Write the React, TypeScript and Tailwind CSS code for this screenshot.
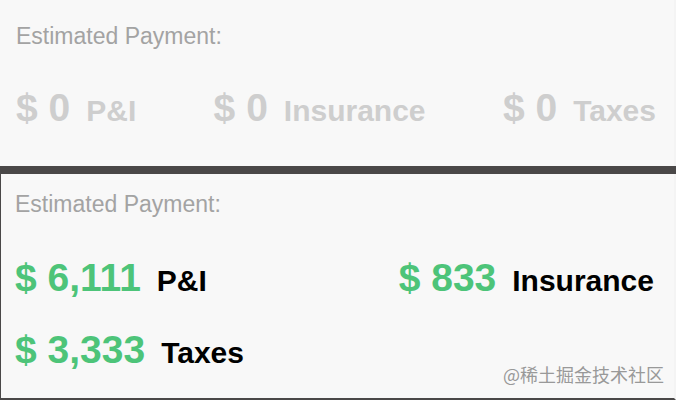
type Item = { amount: string; label: string };

const estimates: Item[] = [
  { amount: '0', label: 'P&I' },
  { amount: '0', label: 'Insurance' },
  { amount: '0', label: 'Taxes' },
];

const results: Item[] = [
  { amount: '6,111', label: 'P&I' },
  { amount: '833', label: 'Insurance' },
  { amount: '3,333', label: 'Taxes' },
];

function Payments({ items, active }: { items: Item[]; active: boolean }) {
  return (
    <dl className={`flex flex-wrap justify-between gap-x-16 gap-y-7 font-bold ${active ? 'text-black' : 'text-[#cecece]'}`}>
      {items.map((item) => (
        <div key={item.label} className="flex flex-row-reverse items-baseline gap-4">
          <dt className="text-[30px] leading-9">{item.label}</dt>
          <dd className={`text-[39px] leading-11 ${active ? 'text-[#4dc479]' : ''}`}>$ {item.amount}</dd>
        </div>
      ))}
    </dl>
  );
}

export default function App() {
  return (
    <main className="relative bg-[#4a4848] font-['Liberation_Sans',Arial,sans-serif]">
      <section className="border-r-2 border-r-[#f4f4f4] bg-[#f8f8f8] pt-5 pr-[18px] pb-9 pl-4">
        <h2 className="mb-[34px] text-[23px] leading-8 text-[#a3a3a3]">Estimated Payment:</h2>
        <Payments items={estimates} active={false} />
      </section>
      <section className="mt-2 border-r-2 border-b-2 border-l border-[#4a4848] border-r-[#f4f4f4] bg-[#f8f8f8] pt-3.5 pr-5 pb-[26px] pl-3.5">
        <h2 className="mb-9 text-[23px] leading-8 text-[#a3a3a3]">Estimated Payment:</h2>
        <Payments items={results} active />
      </section>
      <p className="absolute right-3 bottom-3.5 font-['Noto_Sans_CJK_SC',sans-serif] text-lg leading-6 text-[#999]">@稀土掘金技术社区</p>
    </main>
  );
}
